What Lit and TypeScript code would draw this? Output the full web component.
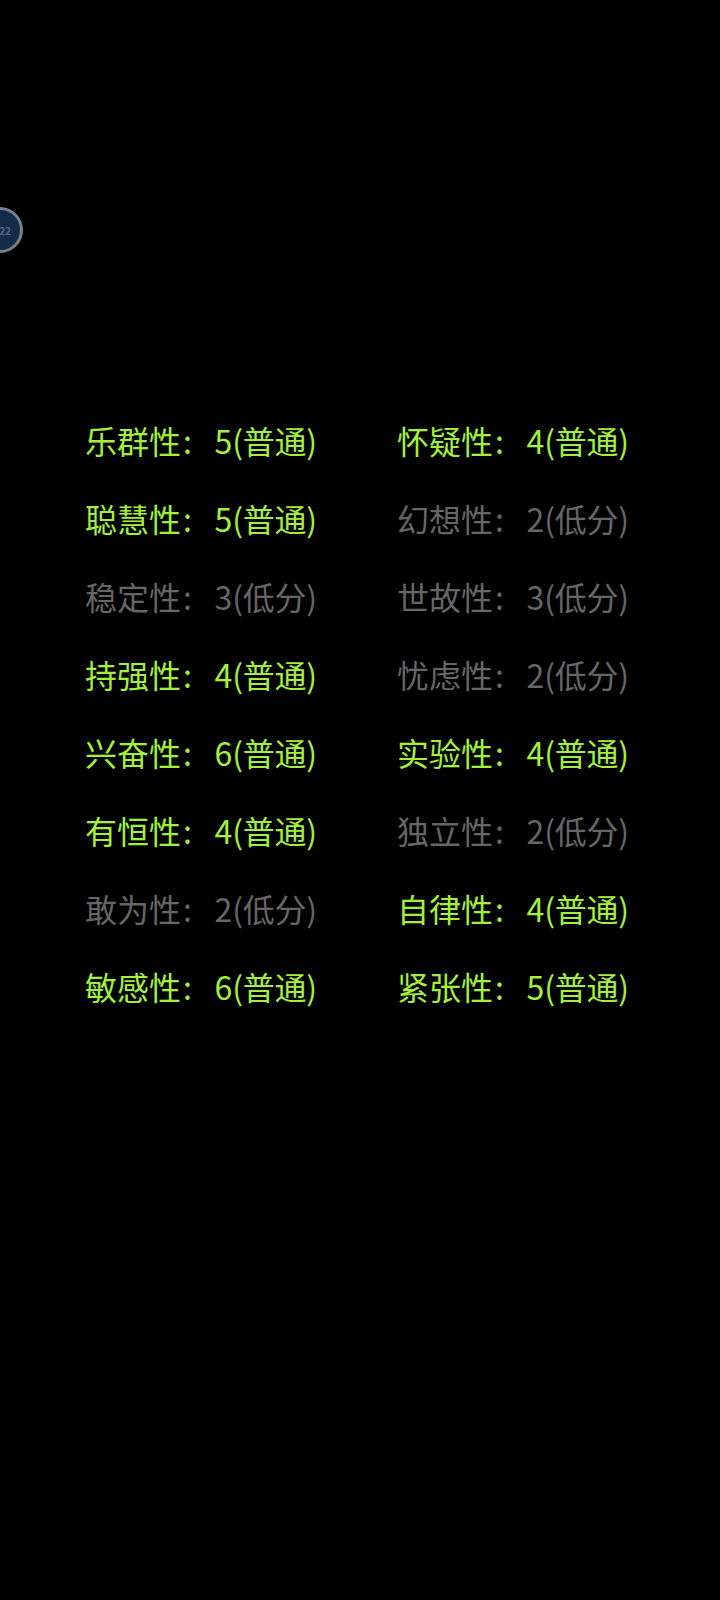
import { LitElement, html, css } from "lit";
import { customElement } from "lit/decorators.js";

const rows: [string, string, boolean][] = [
  ["乐群性", "5(普通)", true], ["怀疑性", "4(普通)", true],
  ["聪慧性", "5(普通)", true], ["幻想性", "2(低分)", false],
  ["稳定性", "3(低分)", false], ["世故性", "3(低分)", false],
  ["持强性", "4(普通)", true], ["忧虑性", "2(低分)", false],
  ["兴奋性", "6(普通)", true], ["实验性", "4(普通)", true],
  ["有恒性", "4(普通)", true], ["独立性", "2(低分)", false],
  ["敢为性", "2(低分)", false], ["自律性", "4(普通)", true],
  ["敏感性", "6(普通)", true], ["紧张性", "5(普通)", true],
];

@customElement("app-root")
export class AppRoot extends LitElement {
  static styles = css`
    :host { display: block; height: 1600px; background: #000; position: relative; overflow: hidden;
      font-family: "Noto Sans CJK SC", "Noto Sans", sans-serif; }
    .grid { display: grid; grid-template-columns: 232px 232px; column-gap: 80px; row-gap: 38px;
      padding: 420px 0 0 85px; font-size: 32px; line-height: 40px; }
    .item { display: flex; justify-content: space-between; white-space: nowrap; }
    .colon { margin-left: 2px; }
    .val { letter-spacing: -0.2px; }
    .hi { color: #a2f03a; }
    .lo { color: #666; }
    .badge { position: absolute; left: -23px; top: 207px; width: 46px; height: 46px; box-sizing: border-box;
      border-radius: 50%; border: 3px solid #75808c; background: #142c4a; color: #56657a; font-weight: 700;
      font-size: 10px; display: flex; align-items: center; justify-content: flex-end; padding-right: 9px; }
  `;
  render() {
    return html`
      <div class="badge">22</div>
      <div class="grid">
        ${rows.map(([k, v, hi]) => html`<div class="item ${hi ? "hi" : "lo"}"><span>${k}<span class="colon">:</span></span><span class="val">${v}</span></div>`)}
      </div>`;
  }
}
